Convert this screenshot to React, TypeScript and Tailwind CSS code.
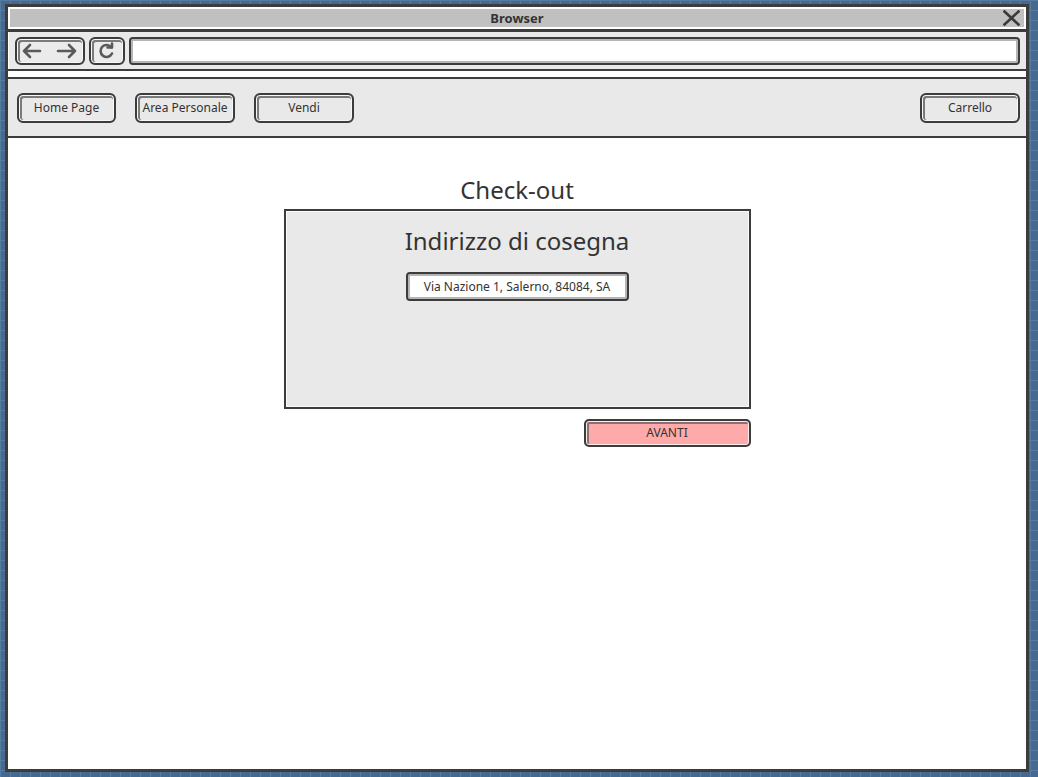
import React from "react";

const font = { fontFamily: '"Noto Sans", "DejaVu Sans", sans-serif' };

function SketchButton({
  children,
  className = "",
}: {
  children?: React.ReactNode;
  className?: string;
}) {
  return (
    <div
      className={
        "flex items-center justify-center rounded-[6px] border-2 border-[#3c3c3c] shadow-[inset_0_0_0_1px_#f7f7f7,inset_1px_1px_0_2px_#7a7a7a] text-[12px] text-[#333] " +
        className
      }
    >
      {children}
    </div>
  );
}

export default function App() {
  return (
    <div
      style={font}
      className="w-[1038px] h-[777px] overflow-hidden bg-[#46698f] bg-[linear-gradient(to_right,#587ba2_1px,transparent_1px),linear-gradient(to_bottom,#587ba2_1px,transparent_1px)] bg-[size:10px_10px] pl-[5px] pt-[4px]"
    >
      <div className="w-[1024px] h-[768px] border-[3px] border-[#3c3c3c] bg-white flex flex-col">
        {/* Title bar */}
        <div className="p-[2px] border-b-[3px] border-[#3c3c3c]">
          <div className="relative h-[18px] bg-[#c0c0c0] flex items-center justify-center">
            <span className="text-[13px] font-bold text-[#333] leading-none">Browser</span>
            <svg
              className="absolute right-[4px] top-[1px]"
              width="17"
              height="16"
              viewBox="0 0 17 16"
            >
              <path d="M1.5 1.5 L15.5 14.5 M15.5 1.5 L1.5 14.5" stroke="#3a3a3a" strokeWidth="2.6" strokeLinecap="square" />
            </svg>
          </div>
        </div>

        {/* Toolbar */}
        <div className="h-[37px] bg-[#e9e9e9] border-l border-white flex items-start gap-[4px] pl-[6px] pr-[6px] pt-[5px]">
          <SketchButton className="w-[70px] h-[28px] bg-[#ebebeb]">
            <svg width="60" height="18" viewBox="0 0 60 18">
              <path d="M4 9 H20 M4 9 L10 3 M4 9 L10 15" stroke="#5a5a5a" strokeWidth="2.6" fill="none" strokeLinecap="round" strokeLinejoin="round" />
              <path d="M38 9 H55 M55 9 L49 3 M55 9 L49 15" stroke="#5a5a5a" strokeWidth="2.6" fill="none" strokeLinecap="round" strokeLinejoin="round" />
            </svg>
          </SketchButton>
          <SketchButton className="w-[36px] h-[28px] bg-[#ebebeb]">
            <svg width="18" height="18" viewBox="0 0 18 18">
              <path d="M13.5 5.5 A6 6 0 1 0 14 11.5" stroke="#5a5a5a" strokeWidth="2.6" fill="none" strokeLinecap="round" />
              <path d="M9.5 5.5 H14 V1.5" stroke="#5a5a5a" strokeWidth="2.6" fill="none" strokeLinecap="round" strokeLinejoin="round" />
            </svg>
          </SketchButton>
          <div className="flex-1 h-[28px] rounded-[4px] border-2 border-[#3c3c3c] bg-white shadow-[inset_0_0_0_2px_#b5b5b5]" />
        </div>

        {/* Separator */}
        <div className="h-[2px] bg-[#3c3c3c]" />
        <div className="h-[6px] bg-white" />
        <div className="h-[2px] bg-[#3c3c3c]" />

        {/* Nav bar */}
        <div className="h-[59px] bg-[#e9e9e9] border-b-[2px] border-[#3c3c3c] flex items-center pl-[9px] pr-[6px]">
          <div className="flex items-center gap-[19px]">
            <SketchButton className="w-[99px] h-[30px]">Home Page</SketchButton>
            <SketchButton className="w-[100px] h-[30px]">Area Personale</SketchButton>
            <SketchButton className="w-[100px] h-[30px]">Vendi</SketchButton>
          </div>
          <SketchButton className="ml-auto w-[100px] h-[30px]">Carrello</SketchButton>
        </div>

        {/* Content */}
        <div className="flex-1 flex flex-col items-center pt-[35px]">
          <div className="h-[34px] leading-[34px] text-[24px] text-[#333]">Check-out</div>
          <div className="mt-[2px] w-[467px] h-[200px] border-2 border-[#3c3c3c] bg-[#e9e9e9] shadow-[inset_0_0_0_1px_#fafafa] flex flex-col items-center pt-[14px]">
            <div className="h-[32px] leading-[32px] text-[24px] text-[#333]">Indirizzo di cosegna</div>
            <div className="mt-[15px] w-[223px] h-[29px] rounded-[4px] border-2 border-[#3c3c3c] bg-white shadow-[inset_0_0_0_2px_#b5b5b5] flex items-center justify-center text-[12px] text-[#333]">
              Via Nazione 1, Salerno, 84084, SA
            </div>
          </div>
          <div className="w-[467px] flex justify-end mt-[10px]">
            <div className="w-[167px] h-[28px] rounded-[5px] border-2 border-[#3c3c3c] bg-[#ffaaaa] shadow-[inset_0_0_0_1px_#fbeaea,inset_1px_1px_0_2px_#8a7070] flex items-center justify-center text-[12px] text-[#333]">
              AVANTI
            </div>
          </div>
        </div>
      </div>
    </div>
  );
}
